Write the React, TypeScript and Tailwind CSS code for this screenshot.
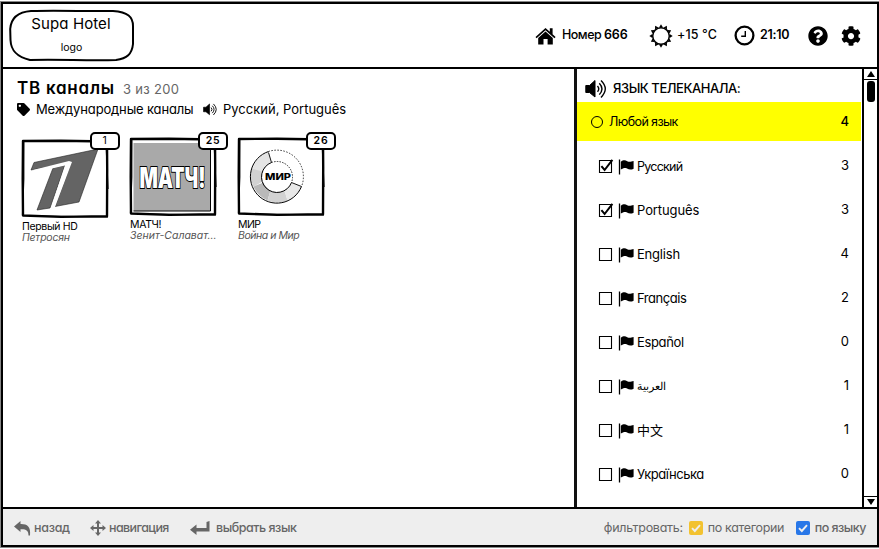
import React from "react";
import { FaCog, FaQuestionCircle, FaTag } from "react-icons/fa";

const HomeIcon = () => (
  <svg className="h-[18px] w-[21px] shrink-0" viewBox="0 0 21 18">
    <path d="M0.5 10 L10.5 1 L14.8 4.8 V1.2 H17.6 V7.3 L20.6 10 L19.4 11.2 L10.5 3.2 L1.6 11.2Z" />
    <path d="M3.2 11 L10.5 4.6 L17.8 11 V17.6 H12.6 V12 H8.5 V17.6 H3.2Z" />
  </svg>
);

const SunIcon = () => (
  <svg className="h-[24px] w-[24px] shrink-0" viewBox="-12 -12 24 24">
    <circle r="8.3" fill="white" stroke="black" strokeWidth="1.5" />
    {[0, 30, 60, 90, 120, 150, 180, 210, 240, 270, 300, 330].map((a) => (
      <path key={a} d="M-2 -8.6 L0 -11.7 L2 -8.6Z" transform={`rotate(${a})`} />
    ))}
  </svg>
);

const ClockIcon = () => (
  <svg className="h-[21px] w-[21px] shrink-0" viewBox="0 0 21 21" fill="none" stroke="black">
    <circle cx="10.5" cy="10.5" r="8.9" strokeWidth="2.3" />
    <path d="M11.3 6 V11.3 H7.2" strokeWidth="1.4" />
  </svg>
);

const Speaker = ({ className }: { className: string }) => (
  <svg className={className} viewBox="0 0 23 20" fill="none" stroke="black" strokeWidth="1.4">
    <path d="M0.8 6.5 H4.5 L10 1.5 V18 L4.5 13.5 H0.8Z" fill="black" strokeWidth="1" />
    <path d="M12.5 7 Q15 9.8 12.5 12.8 M14.3 4.2 Q19.6 9.8 14.3 15.6 M16 1.4 Q24.6 9.8 16 18.4" />
  </svg>
);

const FlagIcon = () => (
  <svg className="h-[16px] w-[17px] shrink-0" viewBox="0 0 17 16">
    <path d="M1.5 0.5 V15.5" stroke="black" strokeWidth="1.3" />
    <path d="M2.8 2.8 C5.5 0.5 7.5 1.2 9.2 2.2 C11.5 3.4 13 2.6 15.6 2 V9.7 C12.8 11.2 11 10.6 9 9.5 C7 8.5 5 9.2 2.8 10.6Z" />
  </svg>
);

const Box = ({ checked }: { checked?: boolean }) => (
  <svg className="h-[16px] w-[16px] shrink-0" viewBox="0 0 16 16" fill="none" stroke="black">
    <path d="M1.5 2.5 H13.5 V14.5 H1.5Z" strokeWidth="1.1" />
    {checked && <path d="M3.4 8.2 L6.6 12 L14.4 1.8" strokeWidth="2" />}
  </svg>
);

const FilterCheck = ({ className }: { className: string }) => (
  <svg className={className} viewBox="0 0 14 14">
    <rect width="14" height="14" rx="2" fill="currentColor" />
    <path d="M3 7.2 L5.8 10 L11 4.2" fill="none" stroke="#eee" strokeWidth="1.9" />
  </svg>
);

const Channel = ({
  number,
  name,
  show,
  nameClass,
  showClass,
  frameClass,
  badgeClass,
  children,
}: {
  number: string;
  name: string;
  show: string;
  nameClass: string;
  showClass: string;
  frameClass: string;
  badgeClass: string;
  children: React.ReactNode;
}) => (
  <article className={`relative w-[100px] ${frameClass}`}>
    <svg className="block h-[80px] w-[89px]" viewBox="0 0 89 80">
      {children}
      <path d="M2 2 L40 1.7 L86 2.5 L86.2 30 L86 77.3 L40 77.9 L2 76.5 L1.7 40Z" fill="none" stroke="black" strokeWidth="2.4" strokeLinejoin="round" />
      <path d="M2.8 3 L2.8 40 L1.5 76 M85 3 L87 50 M20 77 L87 78" fill="none" stroke="black" strokeWidth="1.2" />
    </svg>
    <span className={`absolute top-[-5px] right-px flex h-[18px] w-[30px] items-center justify-center rounded-[5px] border-2 border-black bg-white text-[10.5px] tracking-[0.8px] ${badgeClass}`}>
      {number}
    </span>
    <h2 className={`mt-[2px] ml-px h-[11px] text-[10.5px] leading-[11px] whitespace-nowrap ${nameClass}`}>{name}</h2>
    <p className={`ml-px text-[10.5px] leading-[12px] whitespace-nowrap text-[#555] italic ${showClass}`}>{show}</p>
  </article>
);

const languages = [
  { name: "Русский", count: 3, checked: true, cls: "text-[12.5px] tracking-[-0.75px]" },
  { name: "Português", count: 3, checked: true, cls: "tracking-[-0.1px]" },
  { name: "English", count: 4, cls: "tracking-[-0.2px]" },
  { name: "Français", count: 2, cls: "tracking-[-0.45px]" },
  { name: "Español", count: 0, cls: "tracking-[-0.35px]" },
  { name: "العربية", count: 1, cls: "text-[10.5px]" },
  { name: "中文", count: 1, cls: "" },
  { name: "Українська", count: 0, cls: "tracking-[-0.45px]" },
];

export default function App() {
  return (
    <div className="h-[549px] w-[879px] overflow-hidden bg-white pt-[2px] pb-[2px] pl-px font-['Inter','Noto_Sans_CJK_SC',sans-serif] text-black [font-feature-settings:'cv11']">
      <div className="flex h-full flex-col border-2 border-black shadow-[0_0_0_1px_#888]">
        <header className="flex h-[65px] shrink-0 items-center border-b-2 border-black">
          <div className="relative ml-[6px] h-[53px] w-[126px]">
            <svg className="absolute inset-0 h-full w-full" viewBox="0 0 126 53" fill="none" stroke="black" strokeWidth="2">
              <path d="M22 2 C50 1 78 2.5 104 2 C119 3 124 8 124 17 L124 35 C123 45 118 49.5 107 51 C78 52 50 50 21 51 C8 48 2 42 1.5 31 L1.2 20 C2 9 9 3 22 2Z" />
            </svg>
            <div className="relative pt-[6px] pr-[2px] text-center text-[15px] leading-[18px] tracking-[0.1px]">Supa Hotel</div>
            <div className="relative mt-[9px] pr-px text-center text-[10.5px] leading-[12px]">logo</div>
          </div>
          <div className="ml-auto flex h-full items-center pr-[16px] text-[12.5px] font-semibold whitespace-nowrap">
            <HomeIcon />
            <span className="ml-[6px] w-[81px] font-medium tracking-[-0.5px]">
              Номер <b className="font-semibold tracking-[-0.2px]">666</b>
            </span>
            <span className="ml-[6px] flex"><SunIcon /></span>
            <span className="ml-[4px] w-[57px] font-medium tracking-[0.1px]">+15 °C</span>
            <ClockIcon />
            <span className="ml-[5px] w-[48px] tracking-[-0.3px]">21:10</span>
            <FaQuestionCircle className="h-[20px] w-[20px]" />
            <FaCog className="ml-[13px] h-[20px] w-[20px]" />
          </div>
        </header>

        <main className="flex min-h-0 flex-1">
          <section className="w-[571px] shrink-0 pl-[14px]">
            <div className="flex items-baseline pt-[7px] whitespace-nowrap">
              <h1 className="w-[106px] text-[17px] leading-[25px] font-semibold tracking-[0.75px]">ТВ каналы</h1>
              <span className="text-[13px] tracking-[0.3px] text-[#666]">3 из 200</span>
            </div>
            <div className="flex h-[17px] items-center text-[13px] whitespace-nowrap">
              <FaTag className="h-[13px] w-[13px]" />
              <span className="ml-[6px] w-[167px] tracking-[-0.15px]">Международные каналы</span>
              <Speaker className="h-[13px] w-[15px]" />
              <span className="ml-[5px]">Русский, Português</span>
            </div>
            <div className="mt-[19px] ml-[4px] flex gap-[8px]">
              <Channel number="1" name="Первый HD" show="Петросян" frameClass="pt-[2px]" badgeClass="" nameClass="tracking-[-0.35px]" showClass="tracking-[-0.25px]">
                <path d="M10 31 L13 23.5 L77 10 L58 63 L34 67.5 L50 24Z" fill="#646464" stroke="#222" strokeWidth="0.6" />
                <path d="M32 29 L44 26 L29 69 L16 71Z" fill="#646464" stroke="#222" strokeWidth="0.6" />
                <path d="M10 31.5 L48 22 L51 23 L34 68 L30 69 L44 26.5 L31 29.5Z" fill="white" />
              </Channel>
              <Channel number="25" name="МАТЧ!" show="Зенит-Салават..." frameClass="" badgeClass="font-semibold" nameClass="tracking-[-0.35px]" showClass="">
                <rect x="4.5" y="6" width="77" height="68" fill="#a9a9a9" />
                <path d="M4.5 74 H81.5 V6" fill="none" stroke="black" strokeWidth="1" />
                <text x="10.5" y="50.5" fontSize="29" fontWeight="900" textLength="66" lengthAdjust="spacingAndGlyphs" fill="white" stroke="black" strokeWidth="2" paintOrder="stroke">МАТЧ!</text>
              </Channel>
              <Channel number="26" name="МИР" show="Война и Мир" frameClass="" badgeClass="font-semibold" nameClass="tracking-[-0.55px]" showClass="tracking-[-0.45px]">
                <g transform="translate(40.5 39.5)">
                  <path d="M-9 -25 A26.5 26.5 0 0 0 -24 10 L-15 5 A15.5 15.5 0 0 1 -6 -14Z" fill="#e4e4e4" />
                  <path d="M-26 -8 A26.5 26.5 0 0 0 -24 10 L-15 5 A15.5 15.5 0 0 1 -15 -5Z" fill="#d2d2d2" />
                  <path d="M-24 10 A26.5 26.5 0 0 0 -10 24 L-7 14 A15.5 15.5 0 0 1 -14 6Z" fill="#b9b9b9" />
                  <path d="M-10 24 A26.5 26.5 0 0 0 10 24 L7 14 A15.5 15.5 0 0 1 -7 14Z" fill="#d2d2d2" />
                  <path d="M10 24 A26.5 26.5 0 0 0 24 10 L14 6 A15.5 15.5 0 0 1 7 14Z" fill="#e8e8e8" />
                  <path d="M-9 -25 A26.5 26.5 0 1 0 24 10" fill="none" stroke="black" strokeWidth="1" />
                  <path d="M-9 -25 A26.5 26.5 0 0 1 24 10" fill="none" stroke="black" strokeWidth="0.8" strokeDasharray="1.5 1.5" />
                  <path d="M-6 -14 A15.5 15.5 0 1 0 14 6" fill="none" stroke="black" strokeWidth="1" />
                  <path d="M-6 -14 A15.5 15.5 0 0 1 14 6" fill="none" stroke="black" strokeWidth="0.8" strokeDasharray="1.5 1.2" />
                  <path d="M-9 -24 L-6 -14 M14 6 L24 10" stroke="black" strokeWidth="0.9" />
                  <text x="0.5" y="3.7" textAnchor="middle" fontSize="9" fontWeight="800" textLength="26" lengthAdjust="spacingAndGlyphs">МИР</text>
                </g>
              </Channel>
            </div>
          </section>

          <aside className="flex min-w-0 flex-1 border-l-[3px] border-[#111]">
            <div className="min-w-0 flex-1">
              <div className="flex h-[33px] items-center pt-[7px] pl-[8px]">
                <Speaker className="h-[20px] w-[23px]" />
                <h2 className="ml-[5px] text-[13px] font-medium tracking-[-0.45px] whitespace-nowrap">ЯЗЫК ТЕЛЕКАНАЛА:</h2>
              </div>
              <div className="mr-px flex h-[39px] items-center bg-[#ff0] pt-px pr-[12px] pl-[14px] text-[12.5px]">
                <span className="mr-[6px] h-[12px] w-[12px] rounded-full border-[1.2px] border-black" />
                <span className="tracking-[-0.6px]">Любой язык</span>
                <span className="ml-auto text-[13px] font-medium">4</span>
              </div>
              <ul className="pt-[4px]">
                {languages.map((l) => (
                  <li key={l.name} className="flex h-[44px] items-center pr-[13px] pl-[21px] text-[13px]">
                    <span className="mb-[2px] flex"><Box checked={l.checked} /></span>
                    <span className="mb-px ml-[4px] flex"><FlagIcon /></span>
                    <span className={`ml-[2px] whitespace-nowrap ${l.cls}`}>{l.name}</span>
                    <span className="mb-[2px] ml-auto">{l.count}</span>
                  </li>
                ))}
              </ul>
            </div>
            <div className="flex w-[15px] shrink-0 flex-col items-center border-l-2 border-black">
              <div className="flex h-[11px] w-full items-center justify-center border-b border-black">
                <svg className="h-[6px] w-[8px]" viewBox="0 0 8 6"><path d="M4 0 L8 6 H0Z" /></svg>
              </div>
              <div className="mt-px h-[21px] w-[8px] rounded-[3px] bg-black" />
              <div className="mt-auto flex h-[11px] w-full items-center justify-center border-t border-black">
                <svg className="h-[6px] w-[8px]" viewBox="0 0 8 6"><path d="M4 6 L8 0 H0Z" /></svg>
              </div>
            </div>
          </aside>
        </main>

        <footer className="flex h-[38px] shrink-0 items-center border-t-2 border-black bg-[#eee] pt-[2px] pl-[11px] text-[12.5px] font-medium whitespace-nowrap text-[#666]">
          <svg className="h-[15px] w-[17px]" viewBox="0 0 17 15" fill="currentColor">
            <path d="M0 5.5 L6.5 0 V3 C13 2.8 17 5.5 16 14.5 H14.5 C14.5 9.5 12 8 6.5 8.3 V11Z" />
          </svg>
          <span className="ml-[3px] w-[56px] tracking-[-0.3px]">назад</span>
          <svg className="h-[16px] w-[16px]" viewBox="0 0 16 16" fill="currentColor">
            <path d="M8 0 L11 3.5 H9 V7 H12.5 V5 L16 8 L12.5 11 V9 H9 V12.5 H11 L8 16 L5 12.5 H7 V9 H3.5 V11 L0 8 L3.5 5 V7 H7 V3.5 H5Z" />
          </svg>
          <span className="ml-[3px] w-[81px] tracking-[-0.6px]">навигация</span>
          <svg className="h-[14px] w-[20px]" viewBox="0 0 20 14" fill="currentColor">
            <path d="M0 8.8 L6.5 3.5 V7 H16.5 L16.5 1 L19.5 0 V10.5 H6.5 V14Z" />
          </svg>
          <span className="ml-[6px] tracking-[-0.45px]">выбрать язык</span>
          <span className="ml-auto font-normal tracking-[-0.3px]">фильтровать:</span>
          <FilterCheck className="ml-[6px] h-[14px] w-[14px] text-[#f2c230]" />
          <span className="ml-[5px] w-[88px] font-normal tracking-[-0.35px]">по категории</span>
          <FilterCheck className="h-[14px] w-[14px] text-[#2877e8]" />
          <span className="mr-[11px] ml-[5px] tracking-[-0.5px]">по языку</span>
        </footer>
      </div>
    </div>
  );
}
